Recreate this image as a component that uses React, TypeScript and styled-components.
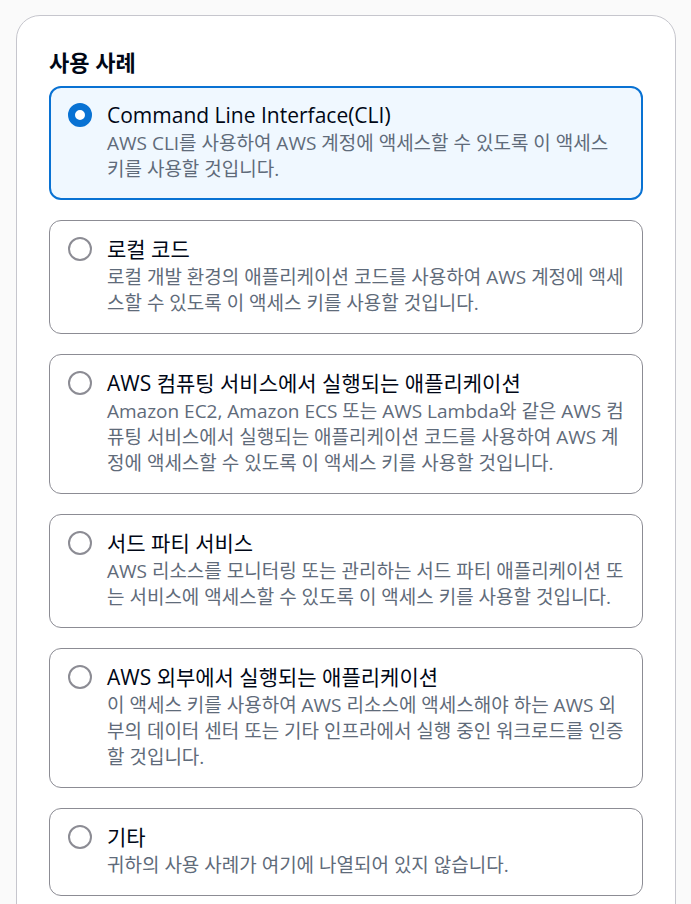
import React from "react";
import styled, { createGlobalStyle } from "styled-components";

const Global = createGlobalStyle`
  html, body { margin: 0; padding: 0; background: #fafafa; }
  body { font-family: "Open Sans", "Noto Sans CJK KR", sans-serif; color: #000716; }
  * { box-sizing: border-box; }
`;

const Page = styled.div`
  padding: 15px 15px 0 16px;
  min-height: 904px;
`;

const Card = styled.div`
  background: #ffffff;
  border: 1px solid #c6c6cd;
  border-radius: 24px;
  padding: 33px 32px 40px 32px;
  width: 660px;
`;

const Heading = styled.h2`
  margin: 0 0 11px 0;
  font-size: 22px;
  line-height: 26px;
  font-weight: 700;
  font-family: "Open Sans", "Noto Sans CJK KR", sans-serif;
  color: #000716;
`;

const List = styled.div`
  display: flex;
  flex-direction: column;
  gap: 20px;
`;

const Tile = styled.label<{ $selected: boolean }>`
  display: flex;
  align-items: flex-start;
  gap: 15px;
  border-radius: 12px;
  border: ${(p) => (p.$selected ? "2px solid #0972d3" : "1px solid #8c8c94")};
  background: ${(p) => (p.$selected ? "#f0f8ff" : "#ffffff")};
  padding: ${(p) => (p.$selected ? "12px 15px 16px 17px" : "13px 16px 17px 18px")};
  cursor: pointer;
`;

const Radio = styled.span<{ $selected: boolean }>`
  flex: none;
  width: 24px;
  height: 24px;
  margin-top: 3px;
  border-radius: 50%;
  border: ${(p) => (p.$selected ? "7px solid #0972d3" : "2px solid #8c8c94")};
  background: #ffffff;
`;

const Texts = styled.div`
  display: flex;
  flex-direction: column;
  min-width: 0;
  flex: 1;
`;

const Title = styled.div`
  font-size: 21px;
  line-height: 30px;
  color: #000716;
`;

const Desc = styled.div`
  font-size: 19px;
  line-height: 26px;
  color: #5f6b7a;
`;

const options = [
  {
    title: "Command Line Interface(CLI)",
    desc: "AWS CLI를 사용하여 AWS 계정에 액세스할 수 있도록 이 액세스 키를 사용할 것입니다.",
  },
  {
    title: "로컬 코드",
    desc: "로컬 개발 환경의 애플리케이션 코드를 사용하여 AWS 계정에 액세스할 수 있도록 이 액세스 키를 사용할 것입니다.",
  },
  {
    title: "AWS 컴퓨팅 서비스에서 실행되는 애플리케이션",
    desc: "Amazon EC2, Amazon ECS 또는 AWS Lambda와 같은 AWS 컴퓨팅 서비스에서 실행되는 애플리케이션 코드를 사용하여 AWS 계정에 액세스할 수 있도록 이 액세스 키를 사용할 것입니다.",
  },
  {
    title: "서드 파티 서비스",
    desc: "AWS 리소스를 모니터링 또는 관리하는 서드 파티 애플리케이션 또는 서비스에 액세스할 수 있도록 이 액세스 키를 사용할 것입니다.",
  },
  {
    title: "AWS 외부에서 실행되는 애플리케이션",
    desc: "이 액세스 키를 사용하여 AWS 리소스에 액세스해야 하는 AWS 외부의 데이터 센터 또는 기타 인프라에서 실행 중인 워크로드를 인증할 것입니다.",
  },
  {
    title: "기타",
    desc: "귀하의 사용 사례가 여기에 나열되어 있지 않습니다.",
  },
];

export default function App() {
  const [selected, setSelected] = React.useState(0);
  return (
    <>
      <Global />
      <Page>
        <Card>
          <Heading>사용 사례</Heading>
          <List>
            {options.map((o, i) => (
              <Tile key={i} $selected={selected === i} onClick={() => setSelected(i)}>
                <Radio $selected={selected === i} />
                <Texts>
                  <Title>{o.title}</Title>
                  <Desc>{o.desc}</Desc>
                </Texts>
              </Tile>
            ))}
          </List>
        </Card>
      </Page>
    </>
  );
}
